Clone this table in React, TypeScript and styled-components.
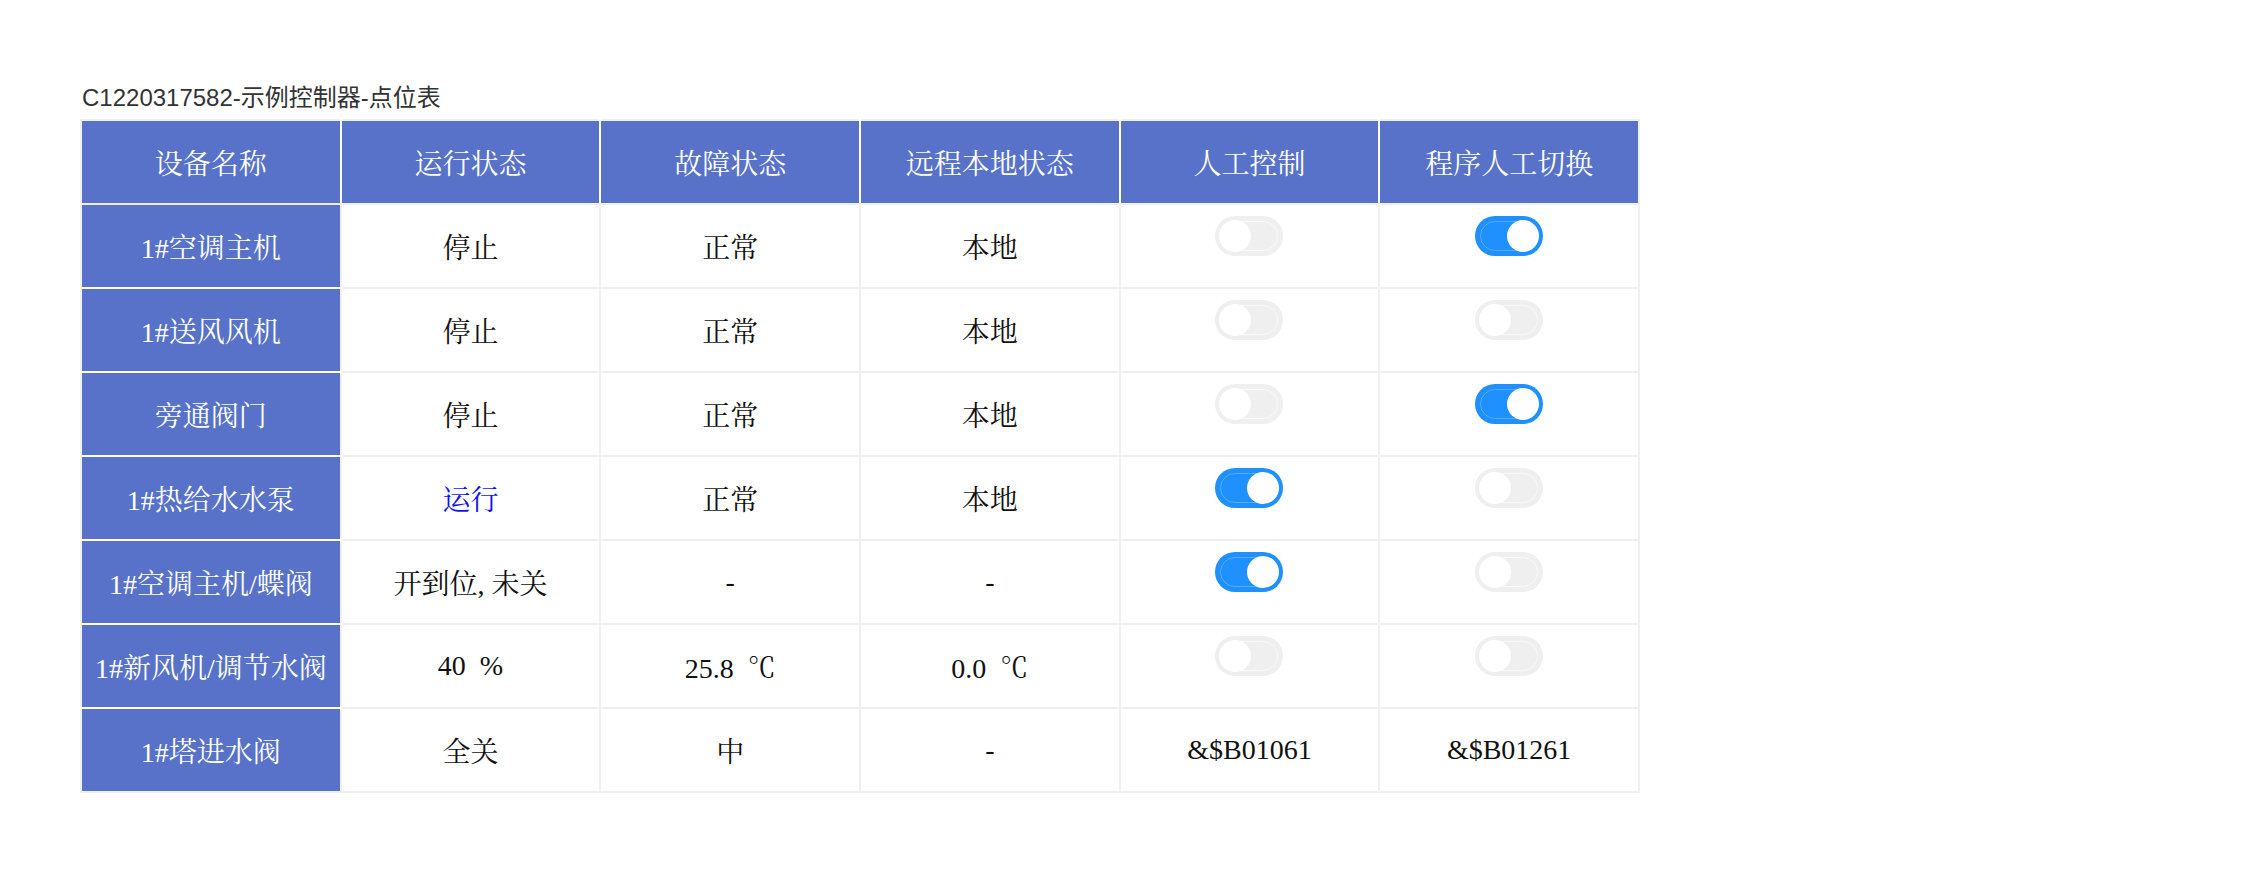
import styled, { createGlobalStyle } from 'styled-components';

const GlobalStyle = createGlobalStyle`
  html, body {
    margin: 0;
    padding: 0;
    background: #fff;
  }
`;

const Page = styled.div`
  padding: 85px 0 0 80px;
`;

const Title = styled.div`
  font-family: 'Liberation Sans', 'Noto Sans CJK SC', sans-serif;
  font-size: 24px;
  line-height: 26px;
  color: #333;
  padding-left: 2px;
  margin-bottom: 8px;
`;

const Table = styled.table`
  width: 1560px;
  table-layout: fixed;
  border-collapse: collapse;
  border: 2px solid #f0f0f0;
  font-family: 'Liberation Serif', 'Noto Serif CJK SC', 'Noto Sans CJK SC', serif;
  font-size: 28px;
`;

const HeadCell = styled.th`
  height: 82px;
  padding: 0;
  background: #5772c8;
  color: #fff;
  font-weight: normal;
  text-align: center;
  vertical-align: middle;
  border: 2px solid #f0f0f0;
  border-left-color: #fff;
  border-right-color: #fff;

  &:first-child {
    border-left-color: #f0f0f0;
  }
  &:last-child {
    border-right-color: #f0f0f0;
  }
`;

const NameCell = styled.td`
  height: 82px;
  padding: 0;
  background: #5772c8;
  color: #fff;
  text-align: center;
  vertical-align: middle;
  border: 2px solid #f0f0f0;
  border-bottom-color: #fff;
  white-space: nowrap;

  tr:last-child > & {
    border-bottom-color: #f0f0f0;
  }
`;

const Cell = styled.td<{ $blue?: boolean }>`
  height: 82px;
  padding: 0;
  color: ${(p) => (p.$blue ? '#1010ff' : '#111')};
  text-align: center;
  vertical-align: middle;
  border: 2px solid #f0f0f0;
  white-space: pre;
`;

const Switch = styled.span<{ $on: boolean }>`
  position: relative;
  display: inline-block;
  vertical-align: top;
  width: 68px;
  height: 40px;
  margin-bottom: 20px;
  border-radius: 20px;
  background: ${(p) => (p.$on ? '#1e90ff' : '#efefef')};

  &::before {
    content: '';
    position: absolute;
    left: 5px;
    right: 5px;
    top: 5px;
    bottom: 5px;
    border-radius: 15px;
    border: 1px solid ${(p) => (p.$on ? 'rgba(255,255,255,0.25)' : 'rgba(255,255,255,0.6)')};
  }

  &::after {
    content: '';
    position: absolute;
    top: 4px;
    left: ${(p) => (p.$on ? '32px' : '4px')};
    width: 32px;
    height: 32px;
    border-radius: 50%;
    background: #fff;
  }
`;

type Control = boolean | string;

interface Row {
  name: string;
  run: string;
  fault: string;
  remote: string;
  manual: Control;
  mode: Control;
  running?: boolean;
}

const rows: Row[] = [
  { name: '1#空调主机', run: '停止', fault: '正常', remote: '本地', manual: false, mode: true },
  { name: '1#送风风机', run: '停止', fault: '正常', remote: '本地', manual: false, mode: false },
  { name: '旁通阀门', run: '停止', fault: '正常', remote: '本地', manual: false, mode: true },
  { name: '1#热给水水泵', run: '运行', fault: '正常', remote: '本地', manual: true, mode: false, running: true },
  { name: '1#空调主机/蝶阀', run: '开到位, 未关', fault: '-', remote: '-', manual: true, mode: false },
  { name: '1#新风机/调节水阀', run: '40  %', fault: '25.8  ℃', remote: '0.0  ℃', manual: false, mode: false },
  { name: '1#塔进水阀', run: '全关', fault: '中', remote: '-', manual: '&$B01061', mode: '&$B01261' },
];

const headers = ['设备名称', '运行状态', '故障状态', '远程本地状态', '人工控制', '程序人工切换'];

const ControlCell = ({ value }: { value: Control }) => (
  <Cell>{typeof value === 'string' ? value : <Switch $on={value} />}</Cell>
);

const App = () => {
  return (
    <Page>
      <GlobalStyle />
      <Title>C1220317582-示例控制器-点位表</Title>
      <Table>
        <thead>
          <tr>
            {headers.map((h) => (
              <HeadCell key={h}>{h}</HeadCell>
            ))}
          </tr>
        </thead>
        <tbody>
          {rows.map((r) => (
            <tr key={r.name}>
              <NameCell>{r.name}</NameCell>
              <Cell $blue={r.running}>{r.run}</Cell>
              <Cell>{r.fault}</Cell>
              <Cell>{r.remote}</Cell>
              <ControlCell value={r.manual} />
              <ControlCell value={r.mode} />
            </tr>
          ))}
        </tbody>
      </Table>
    </Page>
  );
};

export default App;
